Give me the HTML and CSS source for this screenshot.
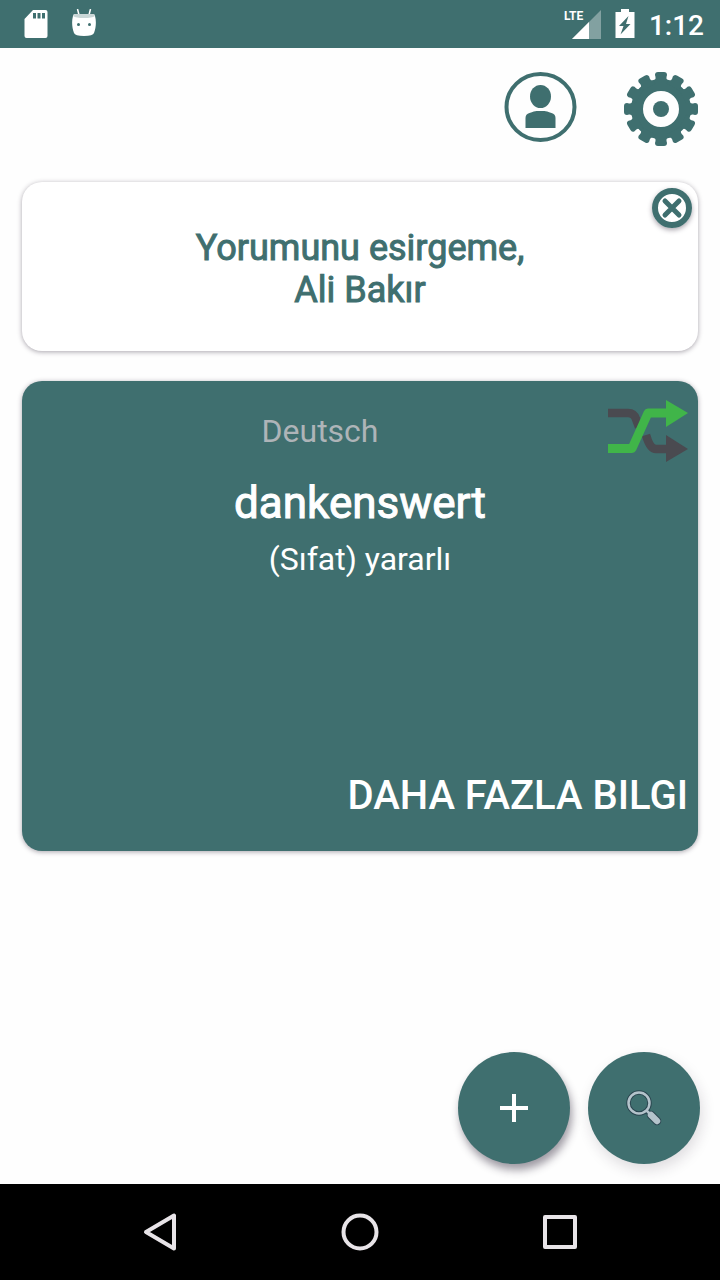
FILE: index.html
```html
<!DOCTYPE html>
<html lang="tr">
<head>
    <meta charset="UTF-8">
    <meta name="viewport" content="width=device-width, initial-scale=1.0">
    <title>Deutsch</title>
    <link rel="stylesheet" href="styles.css">
</head>
<body>
    <div class="status-bar">
        <div class="status-group status-left">
            <svg width="24" height="30" viewBox="0 0 24 30" fill="#fff" aria-hidden="true">
                <path fill-rule="evenodd" d="M9 1h12.500a2 2 0 0 1 2 2v24a2 2 0 0 1-2 2h-19a2 2 0 0 1-2-2V10zM9 4v5.500h3V4zM13.500 4v5.500h3V4zM18 4v5.500h3V4z"/>
            </svg>
            <svg width="24" height="30" viewBox="0 0 24 30" aria-hidden="true">
                <path d="M5.500 0l1.500 6M18.500 0L17 6" stroke="#fff" stroke-width="1.500"/>
                <path d="M1 7q0-2 3-2h16q3 0 3 2c1.500 5 1 12-1 17q-1 3-10 3T2 24C0 19-.5 12 1 7z" fill="#fff"/>
                <path d="M1 7q0-2 3-2h16q3 0 3 2q-3 2-11 2T1 7z" fill="#c9d6d6"/>
                <circle cx="6.500" cy="15.500" r="1.500" fill="#3f6f6f"/>
                <circle cx="17.500" cy="15.500" r="1.500" fill="#3f6f6f"/>
            </svg>
        </div>
        <div class="status-group">
            <div class="signal">
                <span class="lte">LTE</span>
                <svg width="29" height="29" viewBox="0 0 29 29" fill="#fff" aria-hidden="true">
                    <path d="M0 29L29 0v29z" opacity=".35"/>
                    <path d="M0 29L17 12v17z"/>
                </svg>
            </div>
            <svg width="20" height="30" viewBox="0 0 20 30" fill="#fff" aria-hidden="true">
                <path fill-rule="evenodd" d="M6 0h8v3h5.500v26h-19V3H6zM13.500 7L4 17h4.500L5.500 25.500 15.500 15H11z"/>
            </svg>
            <span class="clock">1:12</span>
        </div>
    </div>

    <header class="toolbar">
        <button class="icon-button" aria-label="Profil">
            <svg width="74" height="74" viewBox="0 0 74 74" fill="#3f6f6f">
                <ellipse cx="36.500" cy="35" rx="34" ry="33" fill="none" stroke="#3f6f6f" stroke-width="4"/>
                <ellipse cx="36.500" cy="24.500" rx="10.500" ry="11.500"/>
                <path d="M21.500 56V46q0-4 4-5 5-2 7-2h8q2 0 7 2 4 1 4 5v10z"/>
            </svg>
        </button>
        <button class="icon-button" aria-label="Ayarlar">
            <svg width="74" height="74" viewBox="0 0 74 74" fill="#3f6f6f">
                <circle cx="37" cy="37" r="24" fill="none" stroke="#3f6f6f" stroke-width="12"/>
                <circle cx="37" cy="37" r="8"/>
                <g id="teeth">
                    <path id="tooth" d="M29 9q3-1 2.500-4l-.500-2q0-3 3-3h6q3 0 3 3l-.500 2q-.500 3 2.500 4v3H29z"/>
                    <use href="#tooth" transform="rotate(30 37 37)"/>
                    <use href="#tooth" transform="rotate(60 37 37)"/>
                </g>
                <use href="#teeth" transform="rotate(90 37 37)"/>
                <use href="#teeth" transform="rotate(180 37 37)"/>
                <use href="#teeth" transform="rotate(270 37 37)"/>
            </svg>
        </button>
    </header>

    <main class="content">
        <section class="card review-card">
            <p class="review-text">Yorumunu esirgeme,<br>Ali Bakır</p>
            <button class="close-button" aria-label="Kapat">
                <svg width="40" height="40" viewBox="0 0 40 40">
                    <circle cx="20" cy="20" r="17" fill="#fff" stroke="#3f6f6f" stroke-width="6"/>
                    <path d="M13 13l14 14M27 13L13 27" stroke="#3f6f6f" stroke-width="5" stroke-linecap="round"/>
                </svg>
            </button>
        </section>

        <section class="card word-card">
            <div class="word-head">
                <span class="language">Deutsch</span>
                <button class="icon-button" aria-label="Karıştır">
                    <svg width="80" height="80" viewBox="0 0 80 80">
                        <path d="M0 22h20q6 0 8 6l3 8M38 44q4 14 10 14h12" fill="none" stroke="#4a4a50" stroke-width="8.500"/>
                        <path d="M58 44l22 14-22 13z" fill="#4a4a50"/>
                        <path d="M0 57.500h24L40 22h20" fill="none" stroke="#40b549" stroke-width="9" stroke-linejoin="round"/>
                        <path d="M58 9l22 13-22 14z" fill="#40b549"/>
                    </svg>
                </button>
            </div>
            <h1 class="word">dankenswert</h1>
            <p class="meaning">(Sıfat) yararlı</p>
            <button class="more-button">DAHA FAZLA BILGI</button>
        </section>
    </main>

    <div class="fab-row">
        <button class="fab" aria-label="Ekle">
            <svg width="28" height="28" viewBox="0 0 28 28" fill="#fff">
                <path d="M12 0h4v12h12v4H16v12h-4V16H0v-4h12z"/>
            </svg>
        </button>
        <button class="fab fab-flat" aria-label="Ara">
            <svg width="36" height="36" viewBox="0 0 36 36" fill="none">
                <g stroke="#2b4650">
                    <circle cx="13" cy="13" r="10.500" stroke-width="4.500"/>
                    <path d="M20 20l5 5" stroke-width="5"/>
                    <path d="M25 25l6 6" stroke-width="8.500" stroke-linecap="round"/>
                </g>
                <g stroke="#b4c3cb">
                    <circle cx="13" cy="13" r="10.500" stroke-width="2.500"/>
                    <path d="M20 20l5 5" stroke-width="2.500"/>
                    <path d="M25 25l6 6" stroke-width="6.500" stroke-linecap="round"/>
                </g>
            </svg>
        </button>
    </div>

    <nav class="nav-bar">
        <button class="nav-button" aria-label="Geri">
            <svg width="40" height="40" viewBox="0 0 40 40">
                <path d="M34 3.500v33L6 20z"/>
            </svg>
        </button>
        <button class="nav-button" aria-label="Ana ekran">
            <svg width="40" height="40" viewBox="0 0 40 40">
                <circle cx="20" cy="20" r="16.500"/>
            </svg>
        </button>
        <button class="nav-button" aria-label="Son uygulamalar">
            <svg width="40" height="40" viewBox="0 0 40 40">
                <rect x="5" y="5" width="30" height="30"/>
            </svg>
        </button>
    </nav>
</body>
</html>
```
FILE: styles.css
```css
* {
    margin: 0;
    padding: 0;
    box-sizing: border-box;
}

body {
    font-family: Roboto, "Noto Sans", sans-serif;
    display: flex;
    flex-direction: column;
    min-height: 100vh;
    background-color: #fefefe;
    color: #3f6f6f;
}

button {
    background: none;
    border: none;
    font-family: inherit;
    color: inherit;
    cursor: pointer;
}

svg {
    display: block;
}

/* Status bar */
.status-bar {
    display: flex;
    justify-content: space-between;
    align-items: center;
    height: 48px;
    padding: 0 16px 0 24px;
    background-color: #3f6f6f;
    color: #fff;
}

.status-group {
    display: flex;
    align-items: center;
    gap: 14px;
}

.status-left {
    gap: 24px;
}

.signal {
    position: relative;
    padding-left: 8px;
}

.lte {
    position: absolute;
    top: -2px;
    left: 0;
    font-size: 12px;
    font-weight: bold;
    line-height: 16px;
}

.clock {
    padding-top: 3px;
    font-size: 28px;
    font-weight: 500;
    line-height: 32px;
}

/* Profile and settings */
.toolbar {
    display: flex;
    justify-content: flex-end;
    gap: 46px;
    padding: 24px 22px 36px;
}

.content {
    flex: 1;
    display: flex;
    flex-direction: column;
    gap: 30px;
    padding: 0 22px 30px;
}

/* Cards */
.card {
    border-radius: 20px;
    box-shadow: 0 1px 5px rgba(40, 30, 50, 0.4);
    text-align: center;
}

.review-card {
    position: relative;
    padding: 45px 48px 40px;
    background-color: #fff;
}

.review-text {
    font-size: 36px;
    line-height: 42px;
    -webkit-text-stroke: 1px;
}

.close-button {
    position: absolute;
    top: 6px;
    right: 6px;
    border-radius: 50%;
    box-shadow: 0 2px 5px rgba(40, 30, 50, 0.4);
}

.word-card {
    display: flex;
    flex-direction: column;
    min-height: 470px;
    padding: 10px 10px 31px;
    background-color: #3f6f6f;
    color: #fff;
}

.word-head {
    display: flex;
    align-items: center;
}

.language {
    flex: 1;
    font-size: 32px;
    line-height: 38px;
    color: #aeb4b8;
}

.word {
    margin-top: 6px;
    font-size: 44px;
    font-weight: 400;
    line-height: 52px;
    -webkit-text-stroke: 1px;
}

.meaning {
    margin-top: 11px;
    font-size: 32px;
    line-height: 38px;
}

.more-button {
    align-self: flex-end;
    margin-top: auto;
    font-size: 40px;
    font-weight: 500;
    line-height: 48px;
}

/* Floating buttons */
.fab-row {
    display: flex;
    justify-content: flex-end;
    gap: 18px;
    padding: 0 20px 20px;
}

.fab {
    display: flex;
    justify-content: center;
    align-items: center;
    width: 112px;
    height: 112px;
    border-radius: 50%;
    background-color: #3f6f6f;
    box-shadow: 2px 6px 9px rgba(40, 30, 50, 0.45);
}

.fab-flat {
    box-shadow: 2px 6px 14px rgba(40, 30, 50, 0.15);
}

/* System navigation */
.nav-bar {
    display: flex;
    height: 96px;
    padding: 0 60px;
    background-color: #000;
}

.nav-button {
    flex: 1;
    display: flex;
    justify-content: center;
    align-items: center;
}

.nav-button svg {
    fill: none;
    stroke: #e8e4e8;
    stroke-width: 4;
    stroke-linejoin: round;
}
```
